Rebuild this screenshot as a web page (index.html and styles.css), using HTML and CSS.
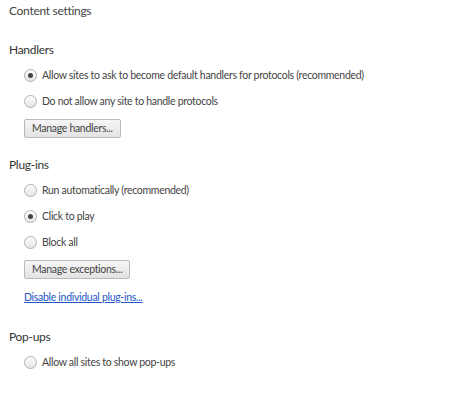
FILE: index.html
```html
<!DOCTYPE html>
<html>
<head>
<meta charset="utf-8">
<link rel="stylesheet" href="styles.css">
</head>
<body>
<div class="page">
  <h1 class="title">Content settings</h1>

  <section class="section sec-handlers">
    <h2 class="heading">Handlers</h2>
    <div class="options">
      <label class="radio"><span class="dot checked"></span><span>Allow sites to ask to become default handlers for protocols (recommended)</span></label>
      <label class="radio"><span class="dot"></span><span>Do not allow any site to handle protocols</span></label>
    </div>
    <button class="btn">Manage handlers...</button>
  </section>

  <section class="section sec-plugins">
    <h2 class="heading">Plug-ins</h2>
    <div class="options">
      <label class="radio"><span class="dot"></span><span>Run automatically (recommended)</span></label>
      <label class="radio"><span class="dot checked"></span><span>Click to play</span></label>
      <label class="radio"><span class="dot"></span><span>Block all</span></label>
    </div>
    <button class="btn">Manage exceptions...</button>
    <a class="link" href="#">Disable individual plug-ins...</a>
  </section>

  <section class="section sec-popups">
    <h2 class="heading">Pop-ups</h2>
    <div class="options">
      <label class="radio"><span class="dot"></span><span>Allow all sites to show pop-ups</span></label>
    </div>
  </section>
</div>
</body>
</html>
```

FILE: styles.css
```css
html, body {
  margin: 0;
  padding: 0;
  background: #fff;
}
body {
  font-family: Lato, "Open Sans", sans-serif;
  color: #333;
  font-size: 10.5px;
  letter-spacing: -0.3px;
}
.page {
  padding: 2px 9px 0 9px;
  display: flex;
  flex-direction: column;
}
.title {
  margin: 0;
  font-size: 12px;
  font-weight: normal;
  color: #444;
  line-height: 17px;
}
.section {
  display: flex;
  flex-direction: column;
  align-items: flex-start;
}
.sec-handlers { margin-top: 22px; }
.sec-plugins { margin-top: 18px; }
.sec-popups { margin-top: 23px; }
.heading {
  margin: 0;
  font-size: 12px;
  font-weight: normal;
  color: #333;
  line-height: 17px;
}
.options {
  display: flex;
  flex-direction: column;
  gap: 10px;
  margin-top: 9px;
  padding-left: 15px;
}
.radio {
  display: flex;
  align-items: center;
  gap: 5px;
  height: 16px;
  color: #444;
}
.dot {
  width: 11px;
  height: 11px;
  border: 1px solid #b0b0b0;
  border-radius: 50%;
  background: linear-gradient(#fbfbfb, #e6e6e6);
  position: relative;
  box-shadow: inset 0 1px 1px rgba(255,255,255,0.8);
}
.dot.checked::after {
  content: "";
  position: absolute;
  left: 3px;
  top: 3px;
  width: 5px;
  height: 5px;
  border-radius: 50%;
  background: #444;
}
.btn {
  margin-top: 10px;
  margin-left: 15px;
  height: 19px;
  padding: 0 7px;
  font-family: inherit;
  font-size: 10.5px;
  letter-spacing: -0.3px;
  color: #444;
  border: 1px solid #b9b9b9;
  border-radius: 2px;
  background: linear-gradient(#f6f6f6, #e3e3e3);
  line-height: 17px;
}
.link {
  margin-top: 11px;
  margin-left: 15px;
  color: #2355c9;
  font-size: 10.5px;
  text-decoration: underline;
  line-height: 15px;
}
```
